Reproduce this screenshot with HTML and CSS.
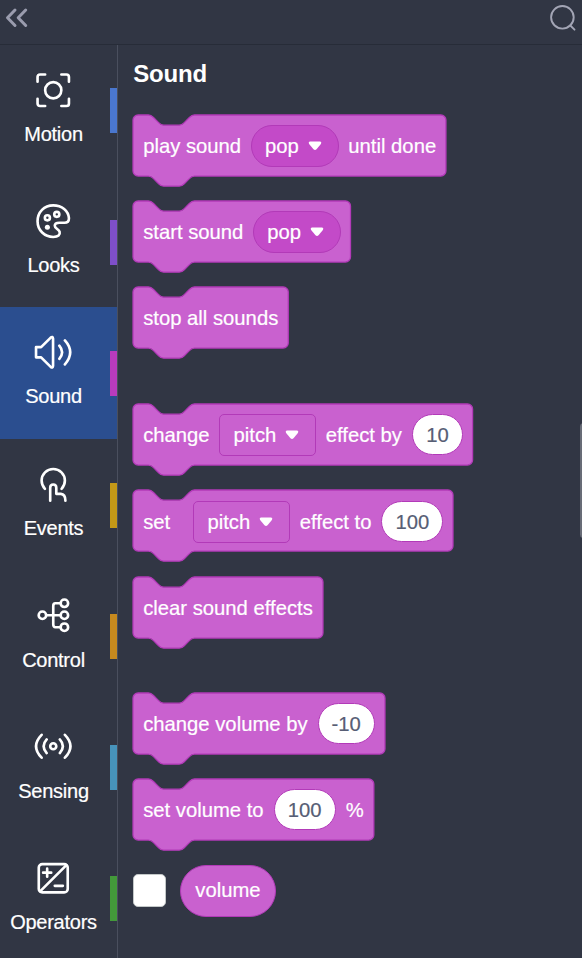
FILE: index.html
```html
<!DOCTYPE html>
<html lang="en">
<head>
<meta charset="utf-8">
<title>Blocks</title>
<link rel="stylesheet" href="styles.css">
</head>
<body>
<header class="topbar">
  <svg class="collapse" width="24" height="22" viewBox="0 0 24 22"><path d="M10 3L2.500 10.800L10 18.500M20.700 3L13.200 10.800L20.700 18.500"/></svg>
  <svg class="search" width="28" height="28" viewBox="0 0 28 28"><circle cx="13.400" cy="13.300" r="11.300"/><path d="M21.300 21.500L25.500 25.700"/></svg>
</header>
<div class="main">
  <nav class="categories">
    <div class="category motion">
      <svg viewBox="0 0 40 40"><path d="M4.500 11.500V7Q4.500 4.500 7 4.500H12M28 4.500H33Q35.500 4.500 35.500 7V11.500M35.500 28.500V33Q35.500 35.500 33 35.500H28M12 35.500H7Q4.500 35.500 4.500 33V28.500"/><circle cx="20" cy="20" r="8"/></svg>
      <span>Motion</span>
    </div>
    <div class="category looks">
      <svg viewBox="0 0 40 40"><path d="M20 4.300C11 4.300 4.500 11 4.500 20C4.500 29 11.500 35.500 20 35.500C25 35.500 27 33.500 26.300 30.500C25.500 28 21.500 27 21.500 24.500C21.500 22 23.500 21.500 26 21.500H31C34 21.500 35.500 19.500 35.500 17C35 9.500 28.500 4.300 20 4.300Z"/><circle cx="14.200" cy="16.600" r="2.500"/><circle cx="23.500" cy="13.200" r="2.500"/><circle class="solid" cx="14.200" cy="26" r="2.500"/></svg>
      <span>Looks</span>
    </div>
    <div class="category sound selected">
      <svg viewBox="0 0 40 40"><path d="M3 15H8L17.500 5.500Q19.500 4 19.800 6.500V33.500Q19.500 36 17.500 34.500L8 25H3Z"/><path d="M26 13.500Q31.500 20 26 26.500M31.500 8.300Q42 20 31.500 32"/></svg>
      <span>Sound</span>
    </div>
    <div class="category events">
      <svg viewBox="0 0 40 40"><path d="M11.800 24.500A11.500 11.500 0 1 1 28.200 24.500"/><path d="M17 36.200V23.500Q17 20.300 20 20.300T23 23.500V29.500H27.500Q32 30 32 36.200"/></svg>
      <span>Events</span>
    </div>
    <div class="category control">
      <svg viewBox="0 0 40 40"><circle cx="9.300" cy="20" r="3.700"/><circle cx="31" cy="8.200" r="3.700"/><circle cx="31" cy="20" r="3.700"/><circle cx="31" cy="31.800" r="3.700"/><path d="M13.500 20H27M27 8.200H22Q20 8.200 20 11V29Q20 31.800 22 31.800H27"/></svg>
      <span>Control</span>
    </div>
    <div class="category sensing">
      <svg viewBox="0 0 40 40"><circle cx="20" cy="20" r="3"/><path d="M13.500 13.300Q7.500 20 13.500 26.700M26.500 13.300Q32.500 20 26.500 26.700M8.500 8.700Q-2.500 20 8.500 31.300M31.500 8.700Q42.500 20 31.500 31.300"/></svg>
      <span>Sensing</span>
    </div>
    <div class="category operators">
      <svg viewBox="0 0 40 40"><rect x="5.700" y="6" width="28.600" height="28" rx="3.500"/><path d="M7 33L33 7M10 14.500H18M14 10.500V18.500M21.500 27.500H29.500"/></svg>
      <span>Operators</span>
    </div>
  </nav>
  <main class="palette">
    <h1>Sound</h1>
    <div class="block w-play">
      <svg class="shape"><path transform="scale(1.281 1.272)" d="M0 4A4 4 0 0 1 4 0H12c2 0 3 1 4 2l4 4c1 1 2 2 4 2h12c2 0 3-1 4-2l4-4c1-1 2-2 4-2H240.300a4 4 0 0 1 4 4v40a4 4 0 0 1-4 4H48c-2 0-3 1-4 2l-4 4c-1 1-2 2-4 2h-12c-2 0-3-1-4-2l-4-4c-1-1-2-2-4-2H4a4 4 0 0 1-4-4Z"/></svg>
      <span>play sound</span>
      <span class="menu round">pop<svg class="arrow" viewBox="0 0 14 10"><path d="M1.700 .6H12.300Q14 1.400 12.900 3.100L8.500 8.300Q7 9.800 5.500 8.300L1.100 3.100Q0 1.400 1.700 .6Z"/></svg></span>
      <span>until done</span>
    </div>
    <div class="block w-start">
      <svg class="shape"><path transform="scale(1.281 1.272)" d="M0 4A4 4 0 0 1 4 0H12c2 0 3 1 4 2l4 4c1 1 2 2 4 2h12c2 0 3-1 4-2l4-4c1-1 2-2 4-2H165.800a4 4 0 0 1 4 4v40a4 4 0 0 1-4 4H48c-2 0-3 1-4 2l-4 4c-1 1-2 2-4 2h-12c-2 0-3-1-4-2l-4-4c-1-1-2-2-4-2H4a4 4 0 0 1-4-4Z"/></svg>
      <span>start sound</span>
      <span class="menu round">pop<svg class="arrow" viewBox="0 0 14 10"><path d="M1.700 .6H12.300Q14 1.400 12.900 3.100L8.500 8.300Q7 9.800 5.500 8.300L1.100 3.100Q0 1.400 1.700 .6Z"/></svg></span>
    </div>
    <div class="block w-stop">
      <svg class="shape"><path transform="scale(1.281 1.272)" d="M0 4A4 4 0 0 1 4 0H12c2 0 3 1 4 2l4 4c1 1 2 2 4 2h12c2 0 3-1 4-2l4-4c1-1 2-2 4-2H117.200a4 4 0 0 1 4 4v40a4 4 0 0 1-4 4H48c-2 0-3 1-4 2l-4 4c-1 1-2 2-4 2h-12c-2 0-3-1-4-2l-4-4c-1-1-2-2-4-2H4a4 4 0 0 1-4-4Z"/></svg>
      <span>stop all sounds</span>
    </div>
    <div class="block group w-change">
      <svg class="shape"><path transform="scale(1.281 1.272)" d="M0 4A4 4 0 0 1 4 0H12c2 0 3 1 4 2l4 4c1 1 2 2 4 2h12c2 0 3-1 4-2l4-4c1-1 2-2 4-2H261.100a4 4 0 0 1 4 4v40a4 4 0 0 1-4 4H48c-2 0-3 1-4 2l-4 4c-1 1-2 2-4 2h-12c-2 0-3-1-4-2l-4-4c-1-1-2-2-4-2H4a4 4 0 0 1-4-4Z"/></svg>
      <span>change</span>
      <span class="menu square">pitch<svg class="arrow" viewBox="0 0 14 10"><path d="M1.700 .6H12.300Q14 1.400 12.900 3.100L8.500 8.300Q7 9.800 5.500 8.300L1.100 3.100Q0 1.400 1.700 .6Z"/></svg></span>
      <span>effect by</span>
      <span class="number two">10</span>
    </div>
    <div class="block w-set">
      <svg class="shape"><path transform="scale(1.281 1.272)" d="M0 4A4 4 0 0 1 4 0H12c2 0 3 1 4 2l4 4c1 1 2 2 4 2h12c2 0 3-1 4-2l4-4c1-1 2-2 4-2H245.800a4 4 0 0 1 4 4v40a4 4 0 0 1-4 4H48c-2 0-3 1-4 2l-4 4c-1 1-2 2-4 2h-12c-2 0-3-1-4-2l-4-4c-1-1-2-2-4-2H4a4 4 0 0 1-4-4Z"/></svg>
      <span class="short">set</span>
      <span class="menu square">pitch<svg class="arrow" viewBox="0 0 14 10"><path d="M1.700 .6H12.300Q14 1.400 12.900 3.100L8.500 8.300Q7 9.800 5.500 8.300L1.100 3.100Q0 1.400 1.700 .6Z"/></svg></span>
      <span>effect to</span>
      <span class="number three">100</span>
    </div>
    <div class="block w-clear">
      <svg class="shape"><path transform="scale(1.281 1.272)" d="M0 4A4 4 0 0 1 4 0H12c2 0 3 1 4 2l4 4c1 1 2 2 4 2h12c2 0 3-1 4-2l4-4c1-1 2-2 4-2H144.300a4 4 0 0 1 4 4v40a4 4 0 0 1-4 4H48c-2 0-3 1-4 2l-4 4c-1 1-2 2-4 2h-12c-2 0-3-1-4-2l-4-4c-1-1-2-2-4-2H4a4 4 0 0 1-4-4Z"/></svg>
      <span>clear sound effects</span>
    </div>
    <div class="block group w-volume">
      <svg class="shape"><path transform="scale(1.281 1.272)" d="M0 4A4 4 0 0 1 4 0H12c2 0 3 1 4 2l4 4c1 1 2 2 4 2h12c2 0 3-1 4-2l4-4c1-1 2-2 4-2H192.700a4 4 0 0 1 4 4v40a4 4 0 0 1-4 4H48c-2 0-3 1-4 2l-4 4c-1 1-2 2-4 2h-12c-2 0-3-1-4-2l-4-4c-1-1-2-2-4-2H4a4 4 0 0 1-4-4Z"/></svg>
      <span>change volume by</span>
      <span class="number minus">-10</span>
    </div>
    <div class="block w-percent">
      <svg class="shape"><path transform="scale(1.281 1.272)" d="M0 4A4 4 0 0 1 4 0H12c2 0 3 1 4 2l4 4c1 1 2 2 4 2h12c2 0 3-1 4-2l4-4c1-1 2-2 4-2H184a4 4 0 0 1 4 4v40a4 4 0 0 1-4 4H48c-2 0-3 1-4 2l-4 4c-1 1-2 2-4 2h-12c-2 0-3-1-4-2l-4-4c-1-1-2-2-4-2H4a4 4 0 0 1-4-4Z"/></svg>
      <span>set volume to</span>
      <span class="number three">100</span>
      <span>%</span>
    </div>
    <div class="monitor"><span class="check"></span><span class="reporter">volume</span></div>
  </main>
  <div class="thumb"></div>
</div>
</body>
</html>
```
FILE: styles.css
```css
* { box-sizing: border-box; }
body {
  margin: 0;
  height: 958px;
  overflow: hidden;
  background: #313644;
  color: #fff;
  font-family: "Liberation Sans", Arial, sans-serif;
}
svg { fill: none; stroke-linecap: round; stroke-linejoin: round; flex: none; }
.topbar {
  height: 45px;
  display: flex;
  justify-content: space-between;
  align-items: flex-start;
  padding: 4px 5px 0 5px;
  border-bottom: 1px solid #272c38;
}
.collapse { margin-top: 3px; stroke: #9a9cae; stroke-width: 3; }
.search { margin: 0 0 0 0; stroke: #a3a5b5; stroke-width: 1.900; }
.main { position: relative; display: flex; height: 913px; overflow: hidden; }
.categories { width: 118px; flex: none; padding-top: .1px; border-right: 1px solid #4a4f5e; }
.category {
  position: relative;
  height: 131.200px;
  padding: 24.500px 10px 0 0;
  display: flex;
  flex-direction: column;
  align-items: center;
  gap: 12px;
  font-size: 20px;
  line-height: 24px;
  letter-spacing: -.250px;
  -webkit-text-stroke: .2px #fff;
}
.events, .control, .sensing, .operators { top: .8px; }
.category svg { width: 40.500px; height: 40.500px; stroke: #fff; stroke-width: 2.600; }
.category .solid { fill: #fff; stroke: none; }
.category::after {
  content: "";
  position: absolute;
  right: 0;
  top: 43.400px;
  width: 7px;
  height: 45px;
  background: var(--c);
}
.selected { background: #2b4e8f; }
.motion { --c: #4a77cf; }
.looks { --c: #7e4fc9; }
.looks::after { top: 43.900px; }
.sound { --c: #b83bbd; }
.events { --c: #c39817; }
.control { --c: #c6891e; }
.sensing { --c: #4793bb; }
.operators { --c: #43993a; }
.palette { padding: 15px 0 0 15.200px; }
h1 { margin: 0; font-size: 24px; line-height: 28px; height: 54.800px; letter-spacing: -.200px; }
.block {
  position: relative;
  height: 61.500px;
  margin-bottom: 24.800px;
  padding-left: 10px;
  display: flex;
  align-items: center;
  gap: 9.600px;
  font-size: 20.250px;
  line-height: 24px;
  white-space: nowrap;
  -webkit-text-stroke: .2px currentColor;
}
.block > span { position: relative; }
.group { margin-top: 55.200px; }
.shape { position: absolute; left: 0; top: 0; width: 100%; height: 100%; overflow: visible; fill: #c961cf; stroke: #b23ab8; stroke-width: 1; }
.w-play { width: 313px; }
.w-start { width: 217.500px; }
.w-stop { width: 155.300px; }
.w-change { width: 339.600px; }
.w-set { width: 320px; padding-top: 1px; }
.w-clear { width: 190px; padding-top: 1px; }
.w-volume { width: 252px; margin-top: 54.600px; }
.w-percent { width: 240.800px; }
.menu {
  height: 42px;
  display: flex;
  align-items: center;
  gap: 9px;
  padding-left: 13.300px;
  border: 1px solid #b23ab8;
  flex: none;
}
.round { width: 88px; border-radius: 21px; background: #c34ac8; }
.square { width: 97px; border-radius: 5px; }
.arrow { width: 14px; height: 10px; margin-top: 1px; fill: #fff; }
.short { width: 40.400px; }
.number {
  height: 41px;
  border: 1px solid #b23ab8;
  border-radius: 21px;
  background: #fff;
  color: #575e75;
  display: flex;
  align-items: center;
  justify-content: center;
  flex: none;
}
.two { width: 51px; }
.three { width: 62px; }
.minus { width: 57px; }
.number { left: .400px; }
.number + span { left: .900px; }
.monitor { display: flex; align-items: center; gap: 14px; height: 52px; margin: -.600px 0 0 -.500px; font-size: 20.250px; -webkit-text-stroke: .2px #fff; }
.check { width: 33px; height: 33px; border: 1px solid #c3c8c8; border-radius: 5px; background: #fff; }
.reporter { width: 96.500px; height: 52px; border: 1px solid #b23ab8; border-radius: 26px; background: #c961cf; display: flex; align-items: center; justify-content: center; }
.thumb { position: absolute; right: -5px; top: 378px; width: 7px; height: 115px; border-radius: 4px; background: #686c77; }
```
